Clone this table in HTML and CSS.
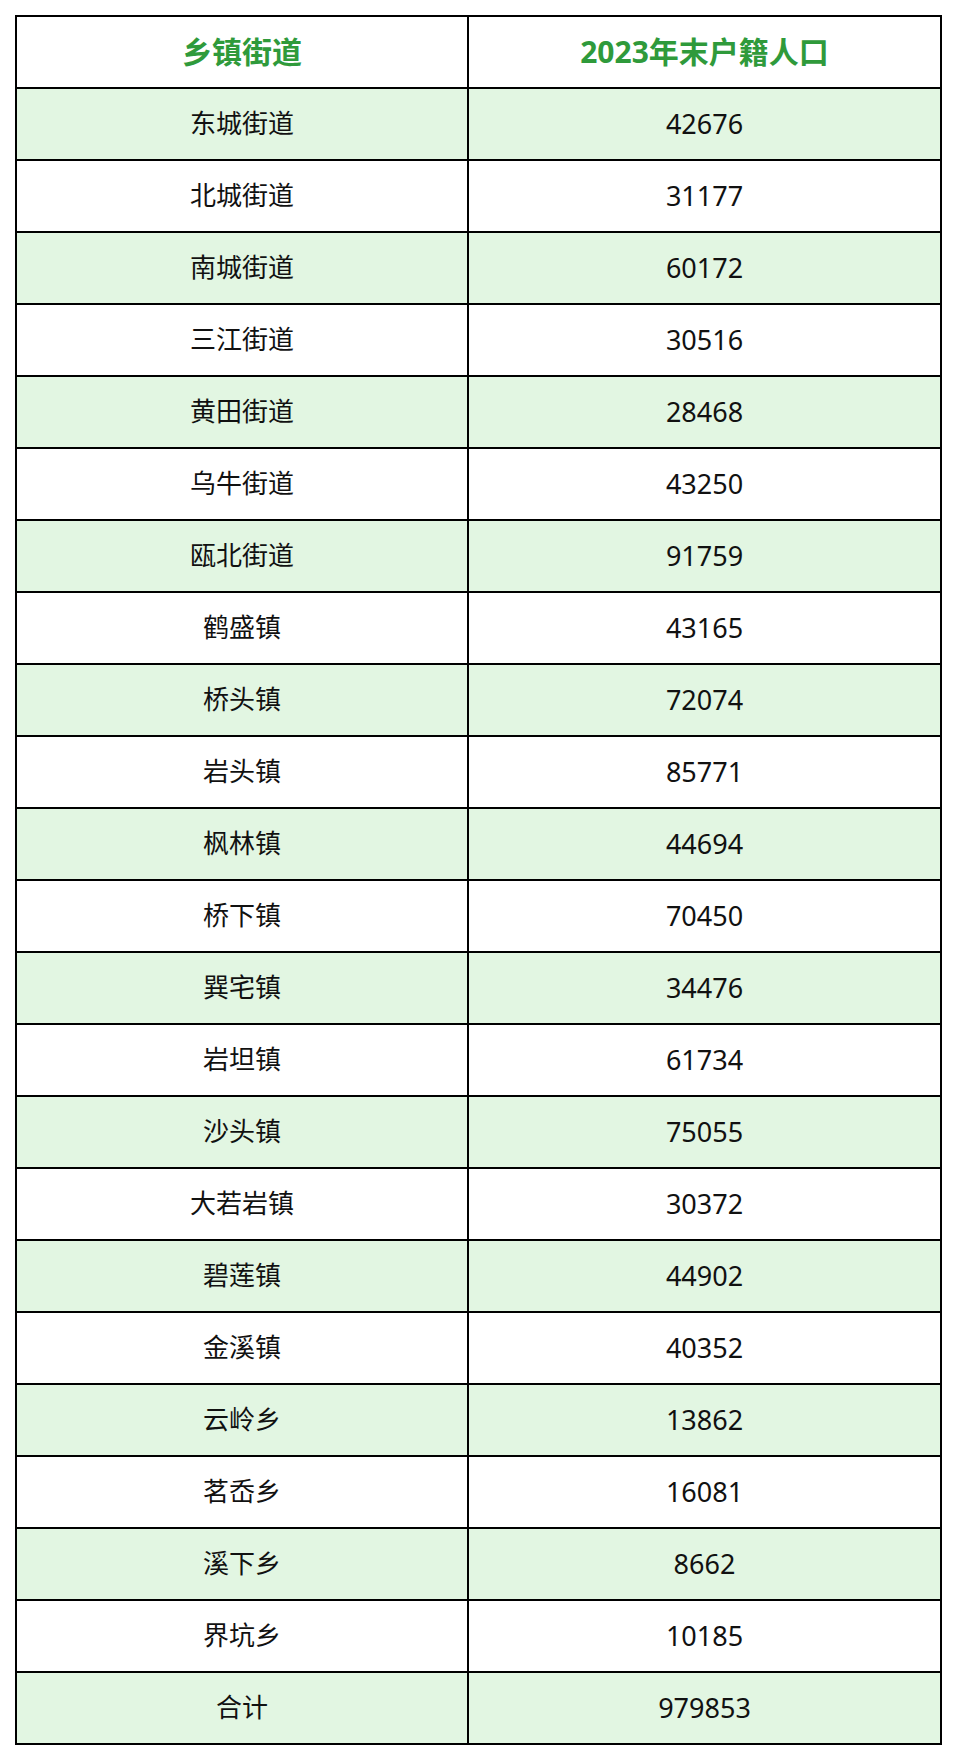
FILE: index.html
```html
<!DOCTYPE html>
<html lang="zh-CN">
<head>
<meta charset="utf-8">
<title>2023年末户籍人口</title>
<link rel="stylesheet" href="styles.css">
</head>
<body>
<div class="table">
  <div class="cell head">乡镇街道</div><div class="cell head">2023年末户籍人口</div>
  <div class="cell alt">东城街道</div><div class="cell alt">42676</div>
  <div class="cell">北城街道</div><div class="cell">31177</div>
  <div class="cell alt">南城街道</div><div class="cell alt">60172</div>
  <div class="cell">三江街道</div><div class="cell">30516</div>
  <div class="cell alt">黄田街道</div><div class="cell alt">28468</div>
  <div class="cell">乌牛街道</div><div class="cell">43250</div>
  <div class="cell alt">瓯北街道</div><div class="cell alt">91759</div>
  <div class="cell">鹤盛镇</div><div class="cell">43165</div>
  <div class="cell alt">桥头镇</div><div class="cell alt">72074</div>
  <div class="cell">岩头镇</div><div class="cell">85771</div>
  <div class="cell alt">枫林镇</div><div class="cell alt">44694</div>
  <div class="cell">桥下镇</div><div class="cell">70450</div>
  <div class="cell alt">巽宅镇</div><div class="cell alt">34476</div>
  <div class="cell">岩坦镇</div><div class="cell">61734</div>
  <div class="cell alt">沙头镇</div><div class="cell alt">75055</div>
  <div class="cell">大若岩镇</div><div class="cell">30372</div>
  <div class="cell alt">碧莲镇</div><div class="cell alt">44902</div>
  <div class="cell">金溪镇</div><div class="cell">40352</div>
  <div class="cell alt">云岭乡</div><div class="cell alt">13862</div>
  <div class="cell">茗岙乡</div><div class="cell">16081</div>
  <div class="cell alt">溪下乡</div><div class="cell alt">8662</div>
  <div class="cell">界坑乡</div><div class="cell">10185</div>
  <div class="cell alt">合计</div><div class="cell alt">979853</div>
</div>
</body>
</html>
```
FILE: styles.css
```css
html, body {
  margin: 0;
  padding: 0;
  background: #ffffff;
}
body {
  padding: 15px 0 0 15px;
  font-family: "Noto Sans", "Noto Sans CJK SC", sans-serif;
}
.table {
  display: grid;
  grid-template-columns: 452px 473px;
  grid-auto-rows: 72px;
  width: 925px;
  border-top: 2px solid #000;
  border-left: 2px solid #000;
}
.cell {
  box-sizing: border-box;
  border-right: 2px solid #000;
  border-bottom: 2px solid #000;
  padding-bottom: 0;
  display: flex;
  align-items: center;
  justify-content: center;
  font-size: 26px;
  line-height: 1.2;
  color: #111;
  background: #fff;
}
.cell:nth-child(even) {
  font-size: 27px;
}
.cell.alt {
  background: #e2f6e2;
}
.cell.head {
  font-size: 30px;
  font-weight: 700;
  color: #2f9a3b;
}
```
